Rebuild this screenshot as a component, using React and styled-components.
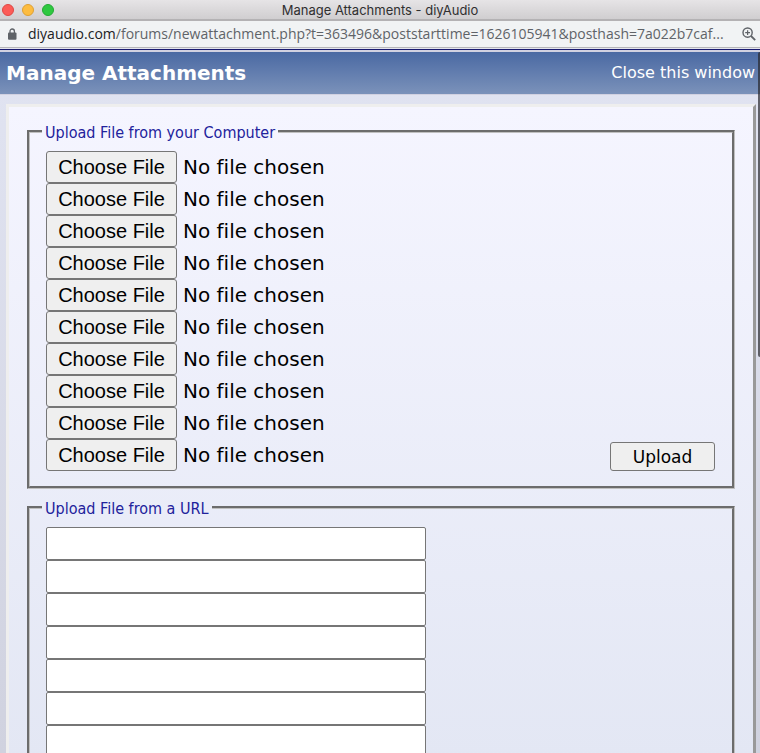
import React from 'react';
import styled, { createGlobalStyle } from 'styled-components';

const COLORS = {
  navy: '#191970',
  legend: '#22229c',
  button: '#efefef',
};

const GlobalStyle = createGlobalStyle`
  * {
    box-sizing: border-box;
  }
  body {
    margin: 0;
    font-family: Verdana, "DejaVu Sans", sans-serif;
    font-variant-ligatures: none;
    color: #000;
  }
`;

const Window = styled.div`
  display: flex;
  flex-direction: column;
  height: 100vh;
  overflow: hidden;
`;

const TitleBar = styled.div`
  display: grid;
  grid-template-columns: 1fr auto 1fr;
  align-items: center;
  height: 21px;
  flex: none;
  background: linear-gradient(#e6e4e6, #d0ced0);
  border-bottom: 2px solid #b4b2b4;
  font: 13px/18px Inter, sans-serif;
  color: #302f30;
`;

const Lights = styled.div`
  display: flex;
  gap: 8px;
  padding-left: 2px;
`;

const Light = styled.span`
  width: 12px;
  height: 12px;
  border-radius: 50%;
  background: ${props => props.$color};
  border: 1px solid ${props => props.$edge};
`;

const AddressBar = styled.div`
  display: flex;
  align-items: center;
  height: 27px;
  flex: none;
  padding: 0 4px 0 7px;
  background: #f1f3f4;
  border-bottom: 1px solid #b6b6b8;
`;

const Url = styled.div`
  flex: 1;
  min-width: 0;
  margin-left: 11px;
  overflow: hidden;
  white-space: nowrap;
  font: 14px/20px "Open Sans", sans-serif;
  color: #5f6368;
  &>span{
    color: #202124;
  }
`;

const Page = styled.main`
  position: relative;
  flex: 1;
  min-height: 0;
  overflow-y: auto;
  scrollbar-width: none;
  background: linear-gradient(#e1e4f2, #d0d2df);
`;

const Header = styled.header`
  display: flex;
  justify-content: space-between;
  align-items: center;
  height: 45px;
  padding: 0 5px 0 6px;
  border-top: 2px solid #d1d1e1;
  border-bottom: 1px solid #d1d1e1;
  background: linear-gradient(#4a69a3, #7b92ba);
  color: #fff;
`;

const NavyLine = styled.div`
  height: 2px;
  flex: none;
  border-top: 1px solid #e4e5ec;
  background: ${COLORS.navy};
`;

const Title = styled.h1`
  margin: 0;
  font-size: 20px;
  line-height: 24px;
`;

const CloseLink = styled.a`
  font-size: 16px;
  line-height: 20px;
  color: #fff;
  text-decoration: none;
`;

const Panel = styled.form`
  margin: 9px 4px 10px 6px;
  padding: 15px 18px;
  border: 3px solid;
  border-color: #eee #999 #999 #eee;
  background: linear-gradient(#f5f5ff, #e3e7f4 650px);
`;

const Group = styled.fieldset`
  display: flex;
  justify-content: space-between;
  align-items: flex-end;
  min-width: 0;
  margin: 0 0 9px;
  padding: 10px 17px 15px 16px;
  border: 3px groove #c0c0c0;
`;

const Legend = styled.legend`
  margin-left: -4px;
  padding: 3px 3px 0;
  font-family: Tahoma, "DejaVu Sans Condensed", sans-serif;
  font-size: 16px;
  line-height: 16px;
  color: ${COLORS.legend};
`;

const Fields = styled.div`
  display: flex;
  flex-direction: column;
`;

const FileInput = styled.input`
  height: 32px;
  width: 320px;
  font: 20px/30px Verdana, "DejaVu Sans", sans-serif;
  font-variant-ligatures: none;
  &::file-selector-button {
    width: 131px;
    height: 32px;
    margin: 0 6px 0 0;
    padding: 0;
    border: 1px solid #767676;
    border-radius: 3px;
    background: ${COLORS.button};
    color: #000;
    font: 20px/30px "Liberation Sans", Arial, sans-serif;
  }
`;

const UrlInput = styled.input`
  width: 380px;
  height: 33px;
  padding: 2px 4px;
  border: 1px solid #767676;
  border-radius: 2px;
  background: #fff;
  font: 20px Verdana, "DejaVu Sans", sans-serif;
`;

const UploadButton = styled.button`
  width: 105px;
  height: 29px;
  padding: 2px 0 0;
  border: 1px solid #767676;
  border-radius: 3px;
  background: ${COLORS.button};
  color: #000;
  font: 17px/25px Tahoma, "DejaVu Sans", sans-serif;
`;

// floats over the right edge of the page
const ScrollThumb = styled.div`
  position: absolute;
  top: 2px;
  right: 0;
  width: 2px;
  height: 305px;
  border-radius: 2px 0 0 2px;
  background: rgba(40, 40, 45, 0.7);
`;

const ROWS = Array.from({ length: 10 }, (_, i) => i + 1);

function LockIcon() {
  return (
    <svg width="10" height="12" viewBox="0 0 10 12" aria-hidden="true">
      <rect x="1" y="4.5" width="8.5" height="7.2" rx="1" fill="#5f6368" />
      <path d="M3 5V3.2a2.2 2.2 0 0 1 4.4 0V5" fill="none" stroke="#5f6368" strokeWidth="1.3" />
    </svg>
  );
}

function ZoomIcon() {
  return (
    <svg width="14" height="14" viewBox="0 0 14 14" fill="none" stroke="#5f6368" aria-hidden="true">
      <circle cx="5.6" cy="5.6" r="4.6" strokeWidth="1.4" />
      <path d="M9 9l4.2 4.2" strokeWidth="1.8" />
      <path d="M3.2 5.6h4.8M5.6 3.2v4.8" strokeWidth="1.2" />
    </svg>
  );
}

export default function App() {
  return (
    <Window>
      <GlobalStyle />
      <TitleBar>
        <Lights>
          <Light $color="#fc5b57" $edge="#df4744" />
          <Light $color="#fdbc40" $edge="#dea034" />
          <Light $color="#2fc840" $edge="#24a934" />
        </Lights>
        <div>Manage Attachments - diyAudio</div>
      </TitleBar>
      <AddressBar>
        <LockIcon />
        <Url>
          <span>diyaudio.com</span>/forums/newattachment.php?t=363496&amp;poststarttime=1626105941&amp;posthash=7a022b7caf...
        </Url>
        <ZoomIcon />
      </AddressBar>
      <NavyLine />
      <Page>
        <Header>
          <Title>Manage Attachments</Title>
          <CloseLink href="#close">Close this window</CloseLink>
        </Header>
        <Panel onSubmit={e => e.preventDefault()}>
          <Group>
            <Legend>Upload File from your Computer</Legend>
            <Fields>
              {ROWS.map(n => (
                <FileInput key={n} type="file" aria-label={`File ${n}`} />
              ))}
            </Fields>
            <UploadButton type="submit">Upload</UploadButton>
          </Group>
          <Group>
            <Legend>Upload File from a URL</Legend>
            <Fields>
              {ROWS.map(n => (
                <UrlInput key={n} type="text" aria-label={`URL ${n}`} />
              ))}
            </Fields>
          </Group>
        </Panel>
        <ScrollThumb />
      </Page>
    </Window>
  );
}
